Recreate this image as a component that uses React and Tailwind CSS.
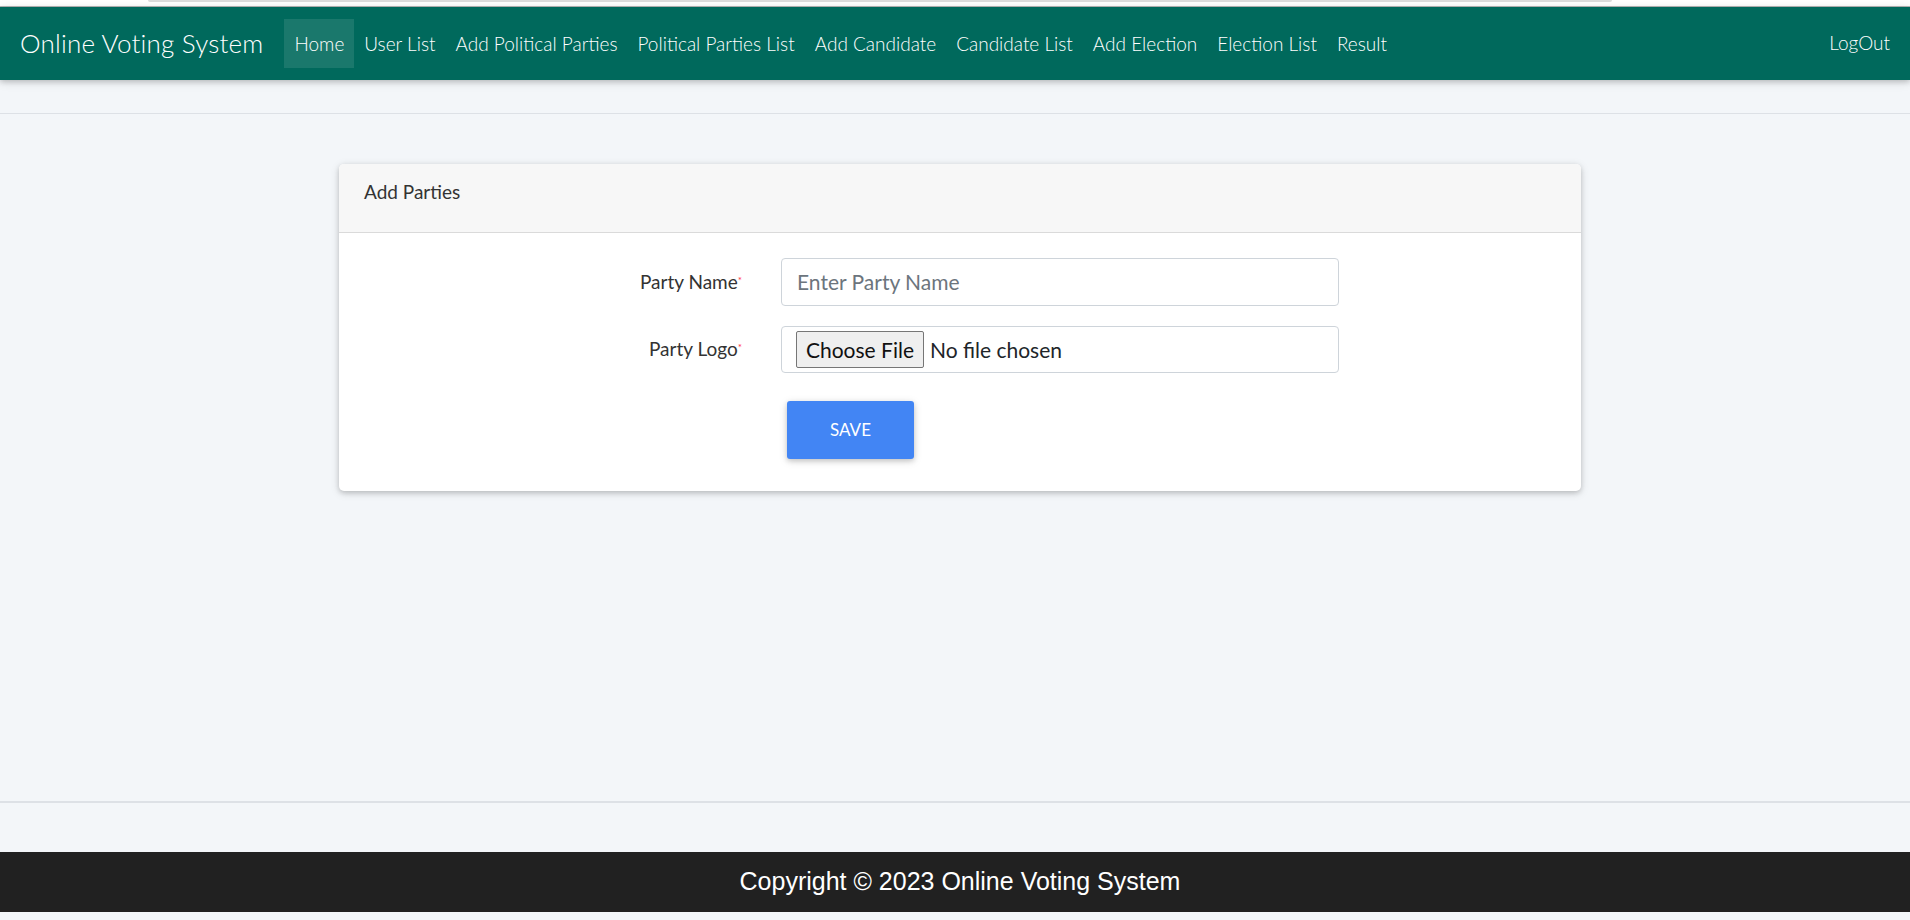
import React from "react";

const navItems = [
  "Home",
  "User List",
  "Add Political Parties",
  "Political Parties List",
  "Add Candidate",
  "Candidate List",
  "Add Election",
  "Election List",
  "Result",
];

export default function App() {
  return (
    <div className="w-[1910px] h-[920px] overflow-hidden bg-[#f3f6f9] flex flex-col font-['Lato',sans-serif]">
      {/* browser strip */}
      <div className="h-[7px] bg-white border-b border-[#b8b8b8] pl-[148px] shrink-0">
        <div className="w-[1464px] h-[2px] bg-[#dcdcdc] rounded-b-full" />
      </div>

      {/* navbar */}
      <nav className="h-[73px] shrink-0 bg-[#00695c] flex items-center pl-[20px] pr-[20px] shadow-[0_2px_5px_0_rgba(0,0,0,0.16),0_2px_10px_0_rgba(0,0,0,0.12)] relative z-10">
        <div className="text-white text-[26px] font-light tracking-[0.2px] mr-[21px]">Online Voting System</div>
        <ul className="flex items-center">
          {navItems.map((item, i) => (
            <li key={item}>
              <a
                className={
                  "block h-[49px] leading-[49px] px-[10px] text-[19px] font-light text-white " +
                  (i === 0 ? "bg-[rgba(255,255,255,0.1)]" : "")
                }
              >
                {item}
              </a>
            </li>
          ))}
        </ul>
        <div className="ml-auto text-white text-[19px] font-light">LogOut</div>
      </nav>

      {/* main */}
      <div className="h-[33px] shrink-0" />
      <main className="border-t border-[#dde1e6] h-[688px] shrink-0 pt-[50px]">
        <div className="ml-[339px] w-[1242px] bg-white rounded-[5px] shadow-[0_2px_5px_0_rgba(0,0,0,0.16),0_2px_10px_0_rgba(0,0,0,0.12)] overflow-hidden">
          <div className="h-[69px] bg-[#f7f7f7] border-b border-[#dadada] pl-[25px] pt-[16px] text-[19px] leading-[24px] text-[#333]">
            Add Parties
          </div>
          <div className="pt-[25px] pb-[32px]">
            <div className="flex items-center">
              <label className="w-[403px] text-right text-[19px] text-[#333]">
                Party Name<sup className="text-[#ff3547] text-[10px]">*</sup>
              </label>
              <div className="ml-[39px] w-[558px] h-[48px] border border-[#ced4da] rounded-[4px] flex items-center pl-[15px] text-[21px] text-[#6c757d]">
                Enter Party Name
              </div>
            </div>
            <div className="flex items-center mt-[20px]">
              <label className="w-[403px] text-right text-[19px] text-[#333]">
                Party Logo<sup className="text-[#ff3547] text-[10px]">*</sup>
              </label>
              <div className="ml-[39px] w-[558px] h-[47px] border border-[#ced4da] rounded-[4px] flex items-center pl-[14px] text-[21px] text-[#212529]">
                <span className="h-[37px] w-[128px] bg-[#efefef] border border-[#767676] rounded-[2px] flex items-center justify-center text-[#111]">
                  Choose File
                </span>
                <span className="ml-[6px]">No file chosen</span>
              </div>
            </div>
            <div className="mt-[28px] ml-[448px]">
              <button className="w-[127px] h-[58px] bg-[#4285f4] text-white text-[17px] rounded-[3px] shadow-[0_2px_5px_0_rgba(0,0,0,0.16),0_2px_10px_0_rgba(0,0,0,0.12)]">
                SAVE
              </button>
            </div>
          </div>
        </div>
      </main>

      {/* footer */}
      <div className="border-t-2 border-[#dde1e6] h-[51px] shrink-0" />
      <footer className="h-[60px] shrink-0 bg-[#212121] flex items-center justify-center pl-[10px] text-white text-[25px] font-['Liberation_Sans',Arial,sans-serif]">
        Copyright © 2023 Online Voting System
      </footer>
      <div className="flex-1" />
    </div>
  );
}
